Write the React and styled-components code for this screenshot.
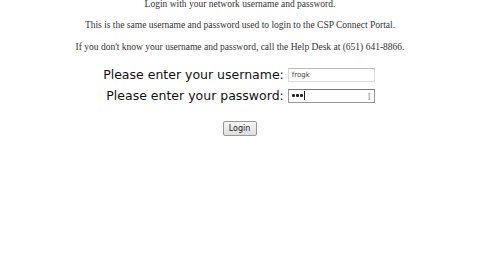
import React from "react";
import styled, { createGlobalStyle } from "styled-components";

const Global = createGlobalStyle`
  html, body { margin: 0; padding: 0; background: #fff; }
  body { width: 480px; height: 270px; overflow: hidden; }
`;

const Page = styled.div`
  display: flex;
  flex-direction: column;
  align-items: center;
  margin-top: -2px;
`;

const Note = styled.p`
  margin: 0 0 ${(p) => p.$gap || 10}px 0;
  font-family: "Liberation Serif", serif;
  font-size: 9.5px;
  line-height: 12px;
  color: #333;
  text-align: center;
`;

const Form = styled.div`
  display: grid;
  grid-template-columns: auto auto;
  column-gap: 4px;
  row-gap: 6px;
  align-items: center;
  margin-top: 3px;
  margin-left: -2px;
`;

const Label = styled.label`
  font-family: "DejaVu Sans", sans-serif;
  font-size: 12.5px;
  color: #111;
  text-align: right;
`;

const Field = styled.div`
  width: 82px;
  height: 12px;
  border: 1px solid ${(p) => (p.$active ? "#999" : "#ddd")};
  border-top-color: ${(p) => (p.$active ? "#777" : "#bbb")};
  font-family: "DejaVu Sans", sans-serif;
  font-size: 7px;
  display: flex;
  align-items: center;
  padding-left: 3px;
  box-sizing: content-box;
  color: #444;
  position: relative;
`;

const Dots = styled.span`
  display: flex;
  gap: 1px;
  align-items: center;
`;

const Dot = styled.span`
  width: 3px;
  height: 3px;
  border-radius: 1px;
  background: #222;
`;

const Cursor = styled.span`
  width: 1px;
  height: 9px;
  background: #222;
  margin-left: 1px;
`;

const Caret = styled.span`
  position: absolute;
  right: 3px;
  top: 1px;
  font-family: "Liberation Serif", serif;
  font-size: 10px;
  color: #999;
`;

const Button = styled.div`
  margin-top: 18px;
  margin-left: -1px;
  width: 32px;
  height: 13px;
  border: 1px solid #999;
  background: linear-gradient(#f6f6f6, #dedede);
  border-radius: 2px;
  font-family: "DejaVu Sans", sans-serif;
  font-size: 8px;
  display: flex;
  align-items: center;
  justify-content: center;
  color: #222;
`;

export default function App() {
  return (
    <>
      <Global />
      <Page>
        <Note $gap={9}>Login with your network username and password.</Note>
        <Note $gap={10}>This is the same username and password used to login to the CSP Connect Portal.</Note>
        <Note $gap={11}>If you don't know your username and password, call the Help Desk at (651) 641-8866.</Note>
        <Form>
          <Label>Please enter your username:</Label>
          <Field>frogk</Field>
          <Label>Please enter your password:</Label>
          <Field $active>
            <Dots>
              <Dot />
              <Dot />
              <Dot />
            </Dots>
            <Cursor />
            <Caret>I</Caret>
          </Field>
        </Form>
        <Button>Login</Button>
      </Page>
    </>
  );
}
